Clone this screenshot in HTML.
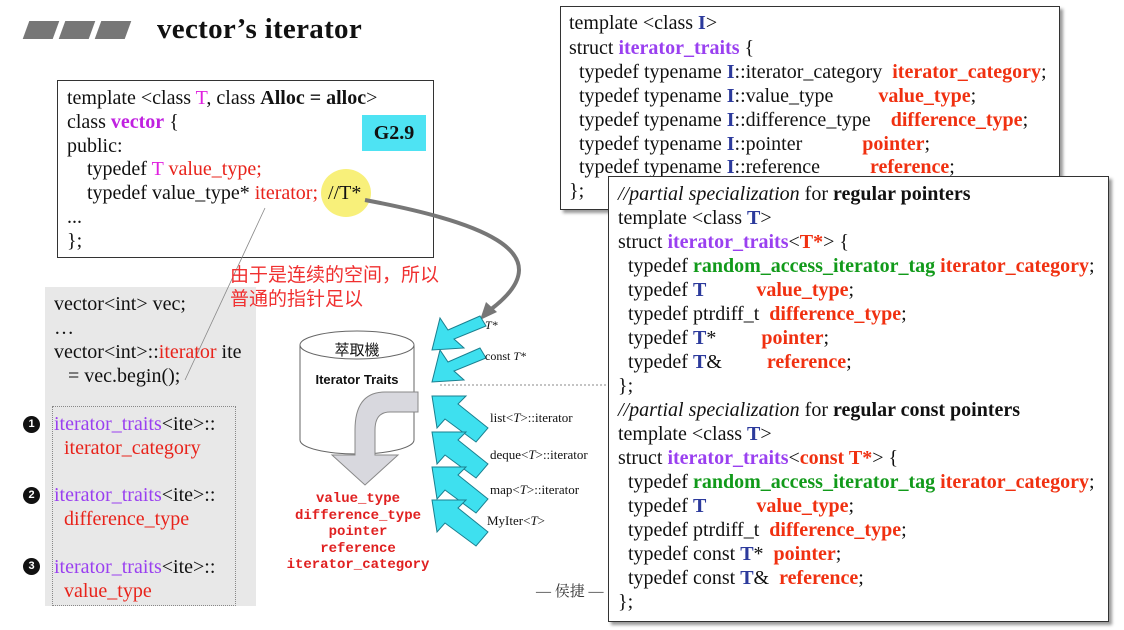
<!DOCTYPE html>
<html><head><meta charset="utf-8"><style>
body{margin:0;width:1124px;height:630px;background:#fff;position:relative;overflow:hidden;font-family:"Liberation Serif","Noto Serif CJK SC",serif;color:#111}
.a{position:absolute}
.l{position:absolute;white-space:pre;font-size:20px;line-height:24px}
.r{color:#e8231b}.rb{color:#f03010;font-weight:bold}.m{color:#e020e0}.mb{color:#c020e0;font-weight:bold}
.p{color:#9a40f0}.pb{color:#9a40f0;font-weight:bold}.b{color:#2c3a9c;font-weight:bold}.g{color:#119a1a;font-weight:bold}
.box{position:absolute;border:1.5px solid #333;background:#fff}
.bar{position:absolute;top:21px;width:30px;height:18px;background:#777;transform:skewX(-20deg)}
.mono{font-family:"Liberation Mono",monospace;font-weight:bold;color:#e02020;font-size:14px;line-height:16.5px;text-align:center}
.num{position:absolute;width:17px;height:17px;border-radius:50%;background:#111;color:#fff;font:bold 11px "Liberation Sans",sans-serif;text-align:center;line-height:17px}
</style></head><body>
<div class="bar" style="left:26px"></div><div class="bar" style="left:62px"></div><div class="bar" style="left:98px"></div>
<div class="a" style="left:157px;top:13px;font-size:29px;font-weight:bold;letter-spacing:0.3px">vector’s iterator</div>

<div class="box" style="left:57px;top:80px;width:375px;height:176px"></div>
<div class="a" style="left:362px;top:115px;width:64px;height:36px;background:#4ee3f3;font-weight:bold;font-size:20px;text-align:center;line-height:36px">G2.9</div>
<div class="a" style="left:321px;top:169px;width:50px;height:48px;border-radius:50%;background:#f8f07a"></div>
<div class="l" style="left:67px;top:86px">template &lt;class <span class="m">T</span>, class <b>Alloc = alloc</b>&gt;</div>
<div class="l" style="left:67px;top:110px">class <span class="mb">vector</span> {</div>
<div class="l" style="left:67px;top:134px">public:</div>
<div class="l" style="left:87px;top:157px">typedef <span class="m">T</span> <span class="r">value_type;</span></div>
<div class="l" style="left:87px;top:181px">typedef value_type* <span class="r">iterator;</span>  //T*</div>
<div class="l" style="left:67px;top:205px">...</div>
<div class="l" style="left:67px;top:229px">};</div>

<div class="a" style="left:45px;top:287px;width:211px;height:319px;background:#e8e8e8"></div>
<div class="a" style="left:52px;top:406px;width:182px;height:198px;border:1px dotted #888"></div>

<svg class="a" style="left:0;top:0" width="1124" height="630">
<path d="M265 208 L185 380" stroke="#888" stroke-width="0.8" fill="none"/>
<path d="M365 200 C470 220 570 250 490 310" stroke="#777" stroke-width="4" fill="none"/>
<path d="M480 320 L486 302 L497 312 Z" fill="#777"/>
<line x1="440" y1="385" x2="608" y2="385" stroke="#888" stroke-dasharray="2,2"/>
<path d="M300 345 L300 440 A57 14 0 0 0 414 440 L414 345" stroke="#666" fill="#fff"/>
<ellipse cx="357" cy="345" rx="57" ry="14" fill="#fff" stroke="#666"/>
<path d="M418 392 L385 392 Q355 392 355 430 L355 455 L332 455 L365 485 L398 455 L375 455 L375 430 Q375 412 390 412 L418 412 Z" fill="#d8d8de" stroke="#888"/>
<g fill="#3ee0ef" stroke="#1a7f8f" stroke-width="1">
<path d="M480 316 L448 330 L440 318 L432 350 L464 348 L454 339 L486 326 Z"/>
<path d="M480 348 L448 362 L440 350 L432 382 L464 380 L454 371 L486 358 Z"/>
<path d="M488 428 L458 404 L466 396 L432 396 L437 428 L445 419 L476 442 Z"/>
<path d="M488 464 L458 440 L466 432 L432 432 L437 464 L445 455 L476 478 Z"/>
<path d="M488 499 L458 475 L466 467 L432 467 L437 499 L445 490 L476 513 Z"/>
<path d="M488 532 L458 508 L466 500 L432 500 L437 532 L445 523 L476 546 Z"/>
</g>
</svg>
<div class="a" style="left:300px;top:339px;width:114px;text-align:center;font-size:15px;font-family:'Noto Sans CJK TC',sans-serif">萃取機</div>
<div class="a" style="left:300px;top:372px;width:114px;text-align:center;font:bold 13px 'Liberation Sans',sans-serif">Iterator Traits</div>
<div class="a mono" style="left:283px;top:491px;width:150px">value_type<br>difference_type<br>pointer<br>reference<br>iterator_category</div>
<div class="a" style="left:485px;top:318px;font-size:12px;font-style:italic">T*</div>
<div class="a" style="left:485px;top:349px;font-size:12px">const <i>T*</i></div>
<div class="a" style="left:490px;top:410px;font-size:13px">list&lt;<i>T</i>&gt;::iterator</div>
<div class="a" style="left:490px;top:447px;font-size:13px">deque&lt;<i>T</i>&gt;::iterator</div>
<div class="a" style="left:490px;top:482px;font-size:13px">map&lt;<i>T</i>&gt;::iterator</div>
<div class="a" style="left:487px;top:513px;font-size:13px">MyIter&lt;<i>T</i>&gt;</div>
<div class="a" style="left:536px;top:580px;font-size:15px;color:#333">— 侯捷 —</div>

<div class="a" style="left:230px;top:262px;font-size:19px;line-height:24px;color:#f03030;font-family:'Noto Sans CJK SC',sans-serif;z-index:2">由于是连续的空间，所以<br>普通的指针足以</div>

<div class="l" style="left:54px;top:292px">vector&lt;int&gt; vec;</div>
<div class="l" style="left:54px;top:316px">…</div>
<div class="l" style="left:54px;top:340px">vector&lt;int&gt;::<span class="r">iterator</span> ite</div>
<div class="l" style="left:68px;top:364px">= vec.begin();</div>
<div class="num" style="left:23px;top:416px">1</div><div class="num" style="left:23px;top:487px">2</div><div class="num" style="left:23px;top:558px">3</div>
<div class="l" style="left:54px;top:412px"><span class="p">iterator_traits</span>&lt;ite&gt;::</div>
<div class="l" style="left:64px;top:436px"><span class="r">iterator_category</span></div>
<div class="l" style="left:54px;top:483px"><span class="p">iterator_traits</span>&lt;ite&gt;::</div>
<div class="l" style="left:64px;top:507px"><span class="r">difference_type</span></div>
<div class="l" style="left:54px;top:555px"><span class="p">iterator_traits</span>&lt;ite&gt;::</div>
<div class="l" style="left:64px;top:579px"><span class="r">value_type</span></div>

<div class="box" style="left:560px;top:6px;width:498px;height:202px;box-shadow:3px 3px 3px #999"></div>
<div class="l" style="left:569px;top:11px">template &lt;class <span class="b">I</span>&gt;</div>
<div class="l" style="left:569px;top:36px">struct <span class="pb">iterator_traits</span> {</div>
<div class="l" style="left:579px;top:60px">typedef typename <span class="b">I</span>::iterator_category  <span class="rb">iterator_category</span>;</div>
<div class="l" style="left:579px;top:84px">typedef typename <span class="b">I</span>::value_type         <span class="rb">value_type</span>;</div>
<div class="l" style="left:579px;top:108px">typedef typename <span class="b">I</span>::difference_type    <span class="rb">difference_type</span>;</div>
<div class="l" style="left:579px;top:132px">typedef typename <span class="b">I</span>::pointer            <span class="rb">pointer</span>;</div>
<div class="l" style="left:579px;top:155px">typedef typename <span class="b">I</span>::reference          <span class="rb">reference</span>;</div>
<div class="l" style="left:569px;top:179px">};</div>

<div class="box" style="left:608px;top:176px;width:499px;height:444px;box-shadow:3px 3px 3px #999"></div>
<div class="l" style="left:618px;top:182px"><i>//partial specialization</i> for <b>regular pointers</b></div>
<div class="l" style="left:618px;top:206px">template &lt;class <span class="b">T</span>&gt;</div>
<div class="l" style="left:618px;top:230px">struct <span class="pb">iterator_traits</span>&lt;<span class="rb">T*</span>&gt; {</div>
<div class="l" style="left:628px;top:254px">typedef <span class="g">random_access_iterator_tag</span> <span class="rb">iterator_category</span>;</div>
<div class="l" style="left:628px;top:278px">typedef <span class="b">T</span>          <span class="rb">value_type</span>;</div>
<div class="l" style="left:628px;top:302px">typedef ptrdiff_t  <span class="rb">difference_type</span>;</div>
<div class="l" style="left:628px;top:326px">typedef <span class="b">T</span>*         <span class="rb">pointer</span>;</div>
<div class="l" style="left:628px;top:350px">typedef <span class="b">T</span>&amp;         <span class="rb">reference</span>;</div>
<div class="l" style="left:618px;top:374px">};</div>
<div class="l" style="left:618px;top:398px"><i>//partial specialization</i> for <b>regular const pointers</b></div>
<div class="l" style="left:618px;top:422px">template &lt;class <span class="b">T</span>&gt;</div>
<div class="l" style="left:618px;top:446px">struct <span class="pb">iterator_traits</span>&lt;<span class="rb">const T*</span>&gt; {</div>
<div class="l" style="left:628px;top:470px">typedef <span class="g">random_access_iterator_tag</span> <span class="rb">iterator_category</span>;</div>
<div class="l" style="left:628px;top:494px">typedef <span class="b">T</span>          <span class="rb">value_type</span>;</div>
<div class="l" style="left:628px;top:518px">typedef ptrdiff_t  <span class="rb">difference_type</span>;</div>
<div class="l" style="left:628px;top:542px">typedef const <span class="b">T</span>*  <span class="rb">pointer</span>;</div>
<div class="l" style="left:628px;top:566px">typedef const <span class="b">T</span>&amp;  <span class="rb">reference</span>;</div>
<div class="l" style="left:618px;top:590px">};</div>
</body></html>
